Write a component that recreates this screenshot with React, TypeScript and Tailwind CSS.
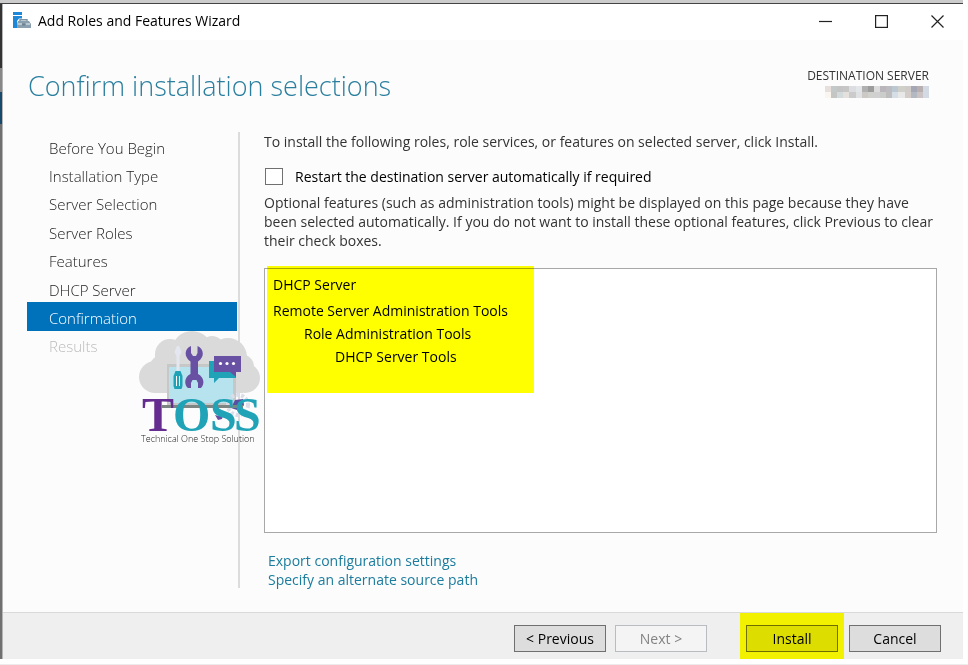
import { ReactNode } from "react";

const steps = [
  "Before You Begin",
  "Installation Type",
  "Server Selection",
  "Server Roles",
  "Features",
  "DHCP Server",
  "Confirmation",
  "Results",
];

const selections = [
  { name: "DHCP Server", className: "pb-[3px]" },
  { name: "Remote Server Administration Tools", className: "" },
  { name: "Role Administration Tools", className: "pl-[31px]" },
  { name: "DHCP Server Tools", className: "pl-[62px]" },
];

const mosaic = [
  ["#e6dfdc", "#c3c8c8", "#c4c4c4", "#c6c6c6", "#dcdde0", "#e2e6e8", "#b0b0b0", "#9c9c9c", "#dcdcdc", "#b9b5bb", "#bcbcc0", "#bac8d2", "#d0cfca", "#cfcbc8", "#a5a8b4", "#b8b0b0", "#d3dae4"],
  ["#faf5ee", "#c4c6c4", "#d2dadc", "#e4e0dc", "#cbcbcb", "#dfe1e3", "#ccc8c6", "#d0d0cc", "#d0d0d0", "#cbcdcb", "#bdbdbd", "#d5dde6", "#e8e8e8", "#d4ccc8", "#b4b8c0", "#cbc3c3", "#d3dae4"],
];

function WizardIcon() {
  return (
    <svg className="h-[18px] w-[18px]" viewBox="0 0 18 18" aria-hidden="true">
      <path d="M0 0h9v3H0zM0 4h9v2.500H6L4 9v7H0z" fill="#1e88d8" />
      <path d="M7 9.500V7.700h7v1.800" fill="none" stroke="#7d93a3" strokeWidth="1.400" />
      <path d="M5 9h11l2 3v4H4v-4z" fill="#8ba0ae" />
      <path d="M4.500 12h4.500m3.500 0H17" stroke="#e8eef1" strokeWidth="1" />
      <rect x="9" y="11.500" width="3.500" height="2" fill="#6c8292" />
    </svg>
  );
}

function TitleBar() {
  return (
    <header className="flex h-9 items-center justify-between bg-white pr-[2px] pb-[2px] pl-[10px]">
      <div className="flex items-center gap-[7px] text-sm text-black">
        <WizardIcon />
        <span>Add Roles and Features Wizard</span>
      </div>

      <div className="flex gap-2">
        <button type="button" aria-label="Minimize" className="flex h-8 w-12 items-center justify-center">
          <svg className="h-[13px] w-[13px]" viewBox="0 0 13 13">
            <path d="M0 6.500h13" stroke="#222" strokeWidth="1.200" />
          </svg>
        </button>
        <button type="button" aria-label="Maximize" className="flex h-8 w-12 items-center justify-center">
          <svg className="h-[13px] w-[13px]" viewBox="0 0 13 13">
            <rect x=".6" y=".6" width="11.800" height="11.800" fill="none" stroke="#222" strokeWidth="1.200" />
          </svg>
        </button>
        <button type="button" aria-label="Close" className="flex h-8 w-12 items-center justify-center">
          <svg className="h-[13px] w-[13px]" viewBox="0 0 13 13">
            <path d="M.5.5l12 12m0-12l-12 12" stroke="#222" strokeWidth="1.200" />
          </svg>
        </button>
      </div>
    </header>
  );
}

function Heading() {
  return (
    <div className="flex items-start justify-between pr-[34px] pl-[25px]">
      <h1 className="pt-7 text-[27px] leading-9 font-light text-[#2a7f9f]">
        Confirm installation selections
      </h1>

      <div className="flex flex-col items-end pt-7 text-xs leading-4 text-[#333]">
        <span>DESTINATION SERVER</span>
        <svg className="mt-[2px] h-3 w-[104px]" viewBox="0 0 17 2" preserveAspectRatio="none" shapeRendering="crispEdges" aria-hidden="true">
          {mosaic.map((row, y) =>
            row.map((fill, x) => (
              <rect key={`${x}-${y}`} x={x} y={y} width="1" height="1" fill={fill} />
            ))
          )}
        </svg>
      </div>
    </div>
  );
}

function TossLogo() {
  return (
    <svg className="pointer-events-none absolute top-[199px] left-[111px] h-[116px] w-[124px]" viewBox="0 0 124 116" role="img" aria-label="TOSS">
      <g fill="#dadada">
        <circle cx="17" cy="46" r="16" />
        <circle cx="24" cy="36" r="12" />
        <circle cx="32" cy="23" r="15" />
        <circle cx="54" cy="20" r="20" />
        <circle cx="74" cy="17" r="12" />
        <circle cx="90" cy="26" r="19" />
        <circle cx="103" cy="36" r="13" />
        <circle cx="107" cy="47" r="15" />
        <path d="M17 22h88v40H17z" />
      </g>

      <path d="M29 33h69v42H29z" fill="#c6c8c8" />
      <path d="M31 36h64v36H31z" fill="#b7e3ee" />

      <circle cx="100" cy="74" r="10" fill="none" stroke="#dcdde8" strokeWidth="4" strokeDasharray="3 2" />
      <path d="M97 69l8-1 1 6-4 6-9-3z" fill="#5a4ea0" />
      <path d="M77 84l4 1 4-1-1 4-4 1z" fill="#6850a2" />
      <path d="M24 74h81v3H24z" fill="#7d8583" />

      <path d="M39 15h2l2.500 6-2 4v15h-3V25l-2-4z" fill="#e5e7f0" />
      <path d="M37.500 40h5l2 5v10l-1 3h-7l-1-3V45z" fill="#20a3b7" />
      <path d="M38.500 45v10m3-10v10" stroke="#fff" />

      <path
        d="M53 15c-7 3-7 11-.5 15.500V43C46 46 46 54 50 57H53v-5l1.500-3h4l1.500 3v5h3c4-4 3-11-3-14V30.500C67 26 66 18 59.500 15v7l-1.500 3h-3l-2-3z"
        fill="#6850a2"
      />

      <path d="M71 30h27v17H81l-5 5v-5h-5z" fill="#20a3b7" />
      <path d="M76 25h27v16h-5v5l-6-5H76z" fill="#6850a2" />
      <g fill="#fff">
        <circle cx="82.500" cy="32.500" r="1.600" />
        <circle cx="89" cy="32.500" r="1.600" />
        <circle cx="95.500" cy="32.500" r="1.600" />
      </g>

      <text y="100" fontFamily="Liberation Serif, serif" fontSize="48" fontWeight="700" fill="#20a3b7">
        <tspan x="4" fill="#652d8f">T</tspan>
        <tspan x="35">O</tspan>
        <tspan x="72">S</tspan>
        <tspan x="96">S</tspan>
      </text>
      <text x="3" y="111" fontFamily="Open Sans, sans-serif" fontSize="9" fontWeight="300" fill="#222">
        Technical One Stop Solution
      </text>
    </svg>
  );
}

function Sidebar() {
  return (
    <nav className="relative w-[213px] shrink-0 border-r-2 border-[#dcdcdc]">
      <ul className="flex h-[227px] flex-col">
        {steps.map((step) => (
          <li
            key={step}
            className={`mr-px flex flex-1 items-center pt-[3px] pl-[22px] text-[15px] leading-5 font-light ${
              step === "Confirmation"
                ? "bg-[#0072bc] text-white"
                : step === "Results"
                  ? "text-[#bbb]"
                  : "text-[#222]"
            }`}
          >
            {step}
          </li>
        ))}
      </ul>

      <TossLogo />
    </nav>
  );
}

function Confirmation() {
  return (
    <main className="flex flex-1 flex-col pl-6 text-sm leading-[19px] text-[#333]">
      <p>
        To install the following roles, role services, or features on selected server, click Install.
      </p>

      <label className="mt-4 flex items-center gap-3 text-black">
        <input
          type="checkbox"
          className="ml-px h-[17px] w-[18px] appearance-none border border-[#707070] bg-white"
        />
        Restart the destination server automatically if required
      </label>

      <p className="mt-[7px] -mr-2">
        Optional features (such as administration tools) might be displayed on this page because they have
        been selected automatically. If you do not want to install these optional features, click Previous to clear
        their check boxes.
      </p>

      <div className="relative mt-[18px] flex-1 border border-[#a8a8a8] bg-white px-2 pt-1">
        <ul className="leading-[23px] text-black">
          {selections.map((item) => (
            <li key={item.name} className={item.className}>
              {item.name}
            </li>
          ))}
        </ul>
        <div className="pointer-events-none absolute -top-[3px] left-[2px] h-[127px] w-[267px] bg-[#ffff00] mix-blend-multiply" />
      </div>

      <div className="mt-[18px] -mb-px flex flex-col items-start pl-1 text-[#1b7c9d]">
        <a href="#export">Export configuration settings</a>
        <a href="#source">Specify an alternate source path</a>
      </div>
    </main>
  );
}

type WizardButtonProps = {
  children: ReactNode;
  className: string;
  disabled?: boolean;
};

function WizardButton({ children, className, disabled }: WizardButtonProps) {
  return (
    <button
      type="button"
      disabled={disabled}
      className={`h-[27px] w-[92px] border text-sm leading-none ${className}`}
    >
      {children}
    </button>
  );
}

function Footer() {
  return (
    <footer className="flex h-[47px] items-stretch justify-end border-t border-[#d9d9d9] bg-[#efefef] pr-[22px]">
      <div className="mr-[33px] flex gap-[9px] pt-3">
        <WizardButton className="border-[#707070] bg-[#dddddd] text-black">&lt; Previous</WizardButton>
        <WizardButton className="border-[#b9bdc1] bg-[#f4f4f4] text-[#838383]" disabled>
          Next &gt;
        </WizardButton>
      </div>
      <div className="mr-[5px] bg-[#f1f100] px-[6px] pt-3">
        <WizardButton className="border-[#6f6f00] bg-[#dddd00] text-black">Install</WizardButton>
      </div>
      <div className="pt-3">
        <WizardButton className="border-[#707070] bg-[#dddddd] text-black">Cancel</WizardButton>
      </div>
    </footer>
  );
}

export default function App() {
  return (
    <div className="flex min-h-screen flex-col border-b border-[#ececec] bg-white pr-[5px] pb-[5px] font-['Open_Sans','Noto_Sans',sans-serif]">
      <div className="h-1 border-b border-[#444] bg-[#cccccc]" />

      <div className="flex flex-1">
        <div className="flex w-[2px] flex-col">
          <div className="h-16 bg-[#333]" />
          <div className="h-6 bg-[#888]" />
          <div className="h-8 bg-[#174a6d]" />
          <div className="flex-1 bg-[#707070]" />
        </div>

        <div className="flex flex-1 flex-col border-l border-[#b5b5b5] bg-[#fcfcfc]">
          <TitleBar />
          <Heading />
          <div className="mt-[28px] mb-6 flex flex-1 pr-[26px] pl-6">
            <Sidebar />
            <Confirmation />
          </div>
          <Footer />
        </div>
      </div>
    </div>
  );
}
